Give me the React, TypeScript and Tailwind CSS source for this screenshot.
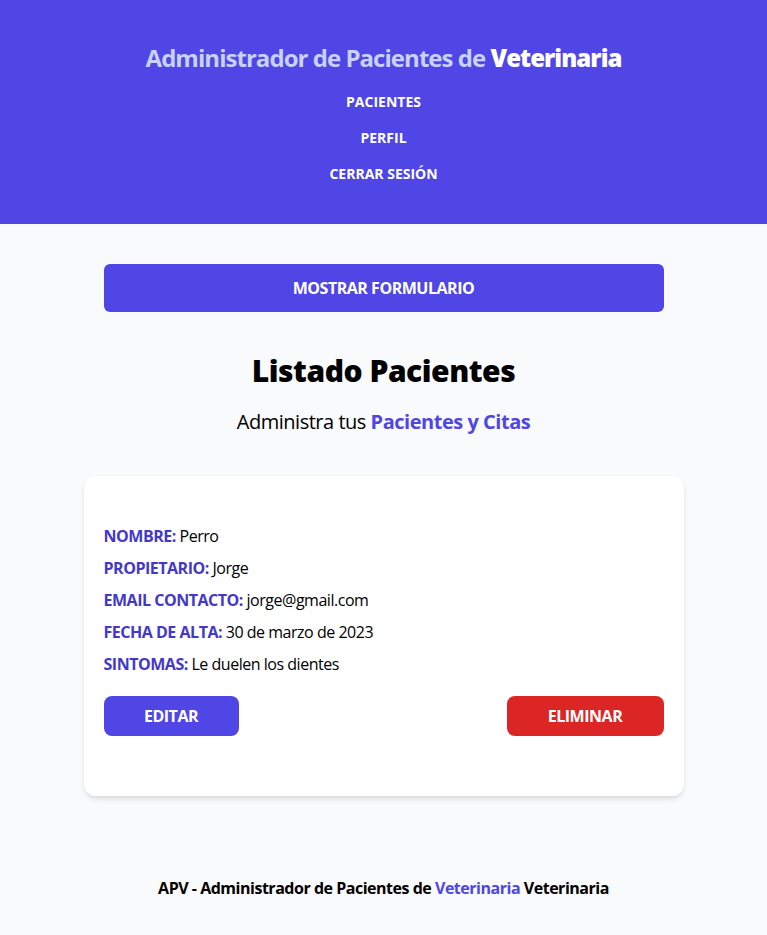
export default function App() {
  const datos = [
    { label: "Nombre", valor: "Perro" },
    { label: "Propietario", valor: "Jorge" },
    { label: "Email Contacto", valor: "jorge@gmail.com" },
    { label: "Fecha de Alta", valor: "30 de marzo de 2023" },
    { label: "Sintomas", valor: "Le duelen los dientes" },
  ];

  return (
    <div className="min-h-[935px] bg-[#f9fafb] font-['Open_Sans',sans-serif] tracking-[-0.03em] flex flex-col">
      <header className="bg-[#4f46e5] py-10 flex flex-col items-center">
        <h1 className="pt-[2px] text-2xl font-bold text-[#c7d2fe] leading-8 tracking-[-0.04em]">
          Administrador de Pacientes de <span className="text-white font-extrabold">Veterinaria</span>
        </h1>
        <nav className="mt-[18px] flex flex-col items-center gap-4 tracking-normal">
          <a href="#" className="text-white text-sm font-bold uppercase leading-5">Pacientes</a>
          <a href="#" className="text-white text-sm font-bold uppercase leading-5">Perfil</a>
          <button type="button" className="text-white text-sm font-bold uppercase leading-5">Cerrar Sesión</button>
        </nav>
      </header>

      <main className="flex-1 flex flex-col items-center pt-10">
        <button
          type="button"
          className="w-[560px] h-12 bg-[#4f46e5] text-white font-bold uppercase rounded-md text-base"
        >
          Mostrar Formulario
        </button>

        <h2 className="mt-[41px] text-3xl font-extrabold text-black leading-9">Listado Pacientes</h2>
        <p className="mt-[19px] text-xl leading-7 text-black">
          Administra tus <span className="text-[#4f46e5] font-bold">Pacientes y Citas</span>
        </p>

        <div className="mt-[40px] w-[600px] bg-white rounded-xl shadow-md px-5 pt-12 pb-[60px]">
          <div className="flex flex-col gap-2">
            {datos.map((d) => (
              <p key={d.label} className="text-base leading-6 text-black">
                <span className="font-bold uppercase text-[#4338ca]">{d.label}: </span>
                {d.valor}
              </p>
            ))}
          </div>
          <div className="mt-5 flex justify-between">
            <button type="button" className="h-10 w-[135px] bg-[#4f46e5] text-white font-bold uppercase rounded-lg tracking-[-0.03em]">
              Editar
            </button>
            <button type="button" className="h-10 w-[157px] bg-[#dc2626] text-white font-bold uppercase rounded-lg tracking-[-0.03em]">
              Eliminar
            </button>
          </div>
        </div>
      </main>

      <footer className="pb-[35px] pt-10 text-center">
        <p className="font-bold text-black leading-6">
          APV - Administrador de Pacientes de <span className="text-[#4f46e5]">Veterinaria</span> Veterinaria
        </p>
      </footer>
    </div>
  );
}
